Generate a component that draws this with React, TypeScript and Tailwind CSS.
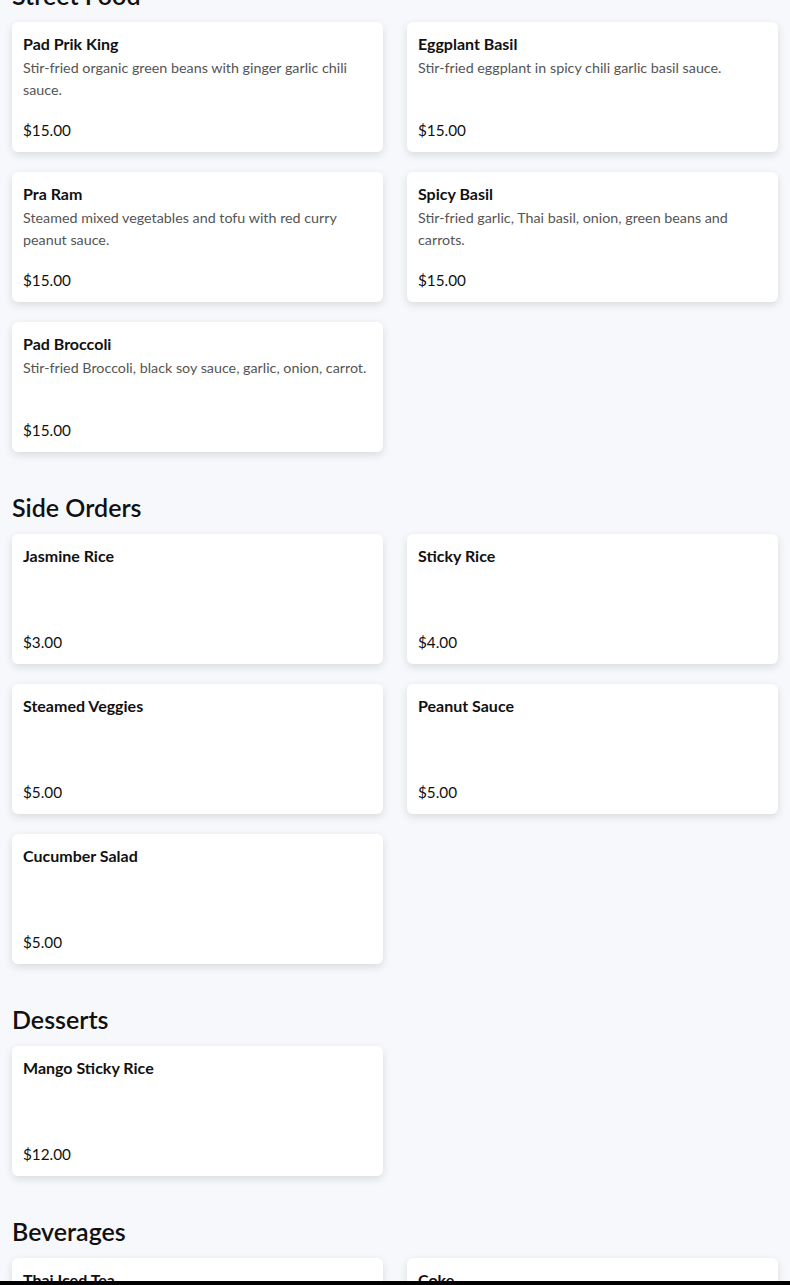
import React from 'react';

interface Item {
  name: string;
  desc?: string;
  price: string;
}

const sections: { title: string; items: Item[] }[] = [
  {
    title: 'Street Food',
    items: [
      { name: 'Pad Prik King', desc: 'Stir-fried organic green beans with ginger garlic chili sauce.', price: '$15.00' },
      { name: 'Eggplant Basil', desc: 'Stir-fried eggplant in spicy chili garlic basil sauce.', price: '$15.00' },
      { name: 'Pra Ram', desc: 'Steamed mixed vegetables and tofu with red curry peanut sauce.', price: '$15.00' },
      { name: 'Spicy Basil', desc: 'Stir-fried garlic, Thai basil, onion, green beans and carrots.', price: '$15.00' },
      { name: 'Pad Broccoli', desc: 'Stir-fried Broccoli, black soy sauce, garlic, onion, carrot.', price: '$15.00' },
    ],
  },
  {
    title: 'Side Orders',
    items: [
      { name: 'Jasmine Rice', price: '$3.00' },
      { name: 'Sticky Rice', price: '$4.00' },
      { name: 'Steamed Veggies', price: '$5.00' },
      { name: 'Peanut Sauce', price: '$5.00' },
      { name: 'Cucumber Salad', price: '$5.00' },
    ],
  },
  {
    title: 'Desserts',
    items: [{ name: 'Mango Sticky Rice', price: '$12.00' }],
  },
  {
    title: 'Beverages',
    items: [
      { name: 'Thai Iced Tea', price: '$5.00' },
      { name: 'Coke', price: '$3.00' },
    ],
  },
];

function MenuCard({ item }: { item: Item }) {
  return (
    <div className="flex flex-col h-[130px] bg-white rounded-md shadow-[0_3px_8px_rgba(0,0,0,0.12)] px-[11px] pt-[12px] pb-[12px]">
      <h3 className="text-[16px] leading-[20px] font-bold text-[#111]">{item.name}</h3>
      {item.desc && (
        <p className="mt-[3px] text-[14.3px] leading-[22px] text-[#555]">{item.desc}</p>
      )}
      <p className="mt-auto text-[15.3px] leading-[20px] text-[#111]">{item.price}</p>
    </div>
  );
}

export default function App() {
  return (
    <div className="min-h-screen bg-[#f7f8fb] overflow-hidden" style={{ fontFamily: 'Lato, "Open Sans", sans-serif' }}>
      <div className="px-3 -mt-[21px] pb-10">
        {sections.map((section, i) => (
          <section key={section.title} className={i === 0 ? '' : 'mt-[39px]'}>
            <h2 className="text-[25px] leading-[32px] font-semibold text-[#111] mb-[11px]">{section.title}</h2>
            <div className="grid grid-cols-2 gap-x-6 gap-y-5">
              {section.items.map((item) => (
                <MenuCard key={item.name} item={item} />
              ))}
            </div>
          </section>
        ))}
      </div>
      <div className="fixed bottom-0 left-0 right-0 h-[4px] bg-black" />
    </div>
  );
}
